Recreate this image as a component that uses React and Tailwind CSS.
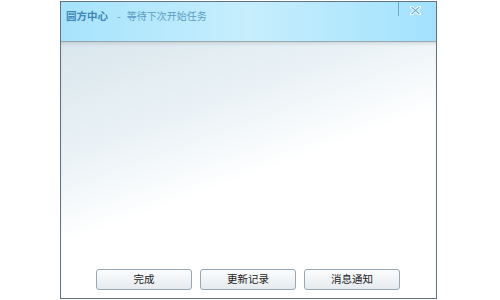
import React from "react";

const buttons = ["完成", "更新记录", "消息通知"];

export default function App() {
  return (
    <div
      className="w-[500px] h-[300px] bg-white relative overflow-hidden"
      style={{ fontFamily: '"Noto Sans CJK SC", "Noto Sans", sans-serif' }}
    >
      <div className="absolute left-[60px] top-[1px] w-[377px] h-[298px] border border-[#60737e] flex flex-col bg-white">
        {/* 标题栏 */}
        <div className="h-[40px] bg-gradient-to-r from-[#a6e3fc] via-[#c6eefd] to-[#a2e2fd] border-b border-[#9aa7ae] flex items-start relative">
          <div className="pl-[5px] pt-[6px] text-[10.5px] leading-[16px] flex items-baseline">
            <span className="font-bold text-[#3f87b4]">圆方中心</span>
            <span className="text-[#5b9cc4] ml-[9px]">-</span>
            <span className="text-[#5b9cc4] ml-[6px] text-[10px]">等待下次开始任务</span>
          </div>
          <div className="absolute left-[337px] top-0 h-[14px] w-px bg-[#6fa9c8]" />
          <div className="absolute left-[348px] top-[3px] w-[12px] h-[10px] flex items-center justify-center">
            <svg width="11" height="9" viewBox="0 0 11 9">
              <path d="M1.5 1 L9.5 8 M9.5 1 L1.5 8" stroke="#ffffff" strokeWidth="3" strokeLinecap="round" />
              <path d="M1.5 1 L9.5 8 M9.5 1 L1.5 8" stroke="#6fb0d8" strokeWidth="1.2" />
            </svg>
          </div>
        </div>
        {/* 内容区 */}
        <div className="flex-1 flex flex-col bg-[linear-gradient(160deg,#d9e6ed_0%,#eaf2f6_30%,#ffffff_52%,#ffffff_100%)] shadow-[inset_0_3px_4px_-2px_rgba(0,0,0,0.15)]">
          <div className="flex-1" />
          <div className="flex justify-start gap-[8px] pl-[35px] pb-[8px]">
            {buttons.map((b) => (
              <button
                key={b}
                className="w-[96px] h-[21px] rounded-[3px] border border-[#97a7b3] bg-gradient-to-b from-[#fbfcfd] to-[#e6ebef] text-[10.5px] leading-none text-[#222] flex items-center justify-center"
              >
                {b}
              </button>
            ))}
          </div>
        </div>
      </div>
    </div>
  );
}
